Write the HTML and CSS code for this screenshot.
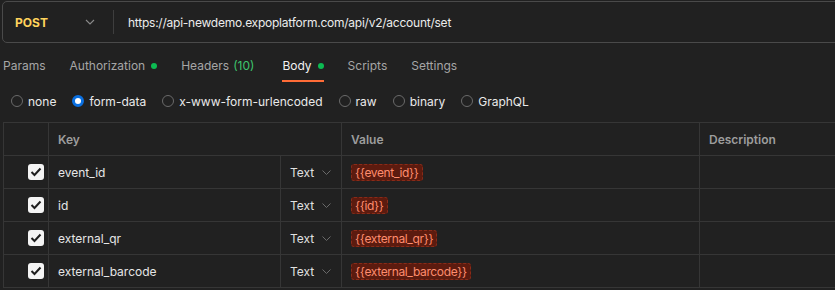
FILE: index.html
```html
<!DOCTYPE html>
<html lang="en">
  <head>
    <meta charset="UTF-8" />
    <title>POST account/set</title>
    <link rel="stylesheet" href="styles.css">
  </head>
  <body>
    <!-- request line -->
    <div class="url-bar">
      <div class="method">
        <span class="method-name">POST</span>
        <svg class="chev" width="10" height="6" viewBox="0 0 10 6"><path d="M1 1l4 4 4-4" fill="none" stroke="#8a8a8a" stroke-width="1.1"/></svg>
      </div>
      <div class="divider"></div>
      <div class="url">https://api-newdemo.expoplatform.com/api/v2/account/set</div>
    </div>

    <!-- request tabs -->
    <div class="tabs">
      <span class="tab">Params</span>
      <span class="tab">Authorization <i class="dot"></i></span>
      <span class="tab">Headers <em class="count">(10)</em></span>
      <span class="tab active">Body <i class="dot"></i></span>
      <span class="tab">Scripts</span>
      <span class="tab">Settings</span>
    </div>

    <!-- body type -->
    <div class="body-types">
      <label class="radio"><span class="circle"></span>none</label>
      <label class="radio"><span class="circle on"></span>form-data</label>
      <label class="radio"><span class="circle"></span>x-www-form-urlencoded</label>
      <label class="radio"><span class="circle"></span>raw</label>
      <label class="radio"><span class="circle"></span>binary</label>
      <label class="radio"><span class="circle"></span>GraphQL</label>
    </div>

    <!-- form-data table -->
    <div class="kv-table">
      <div class="cell"></div>
      <div class="cell head span2">Key</div>
      <div class="cell head">Value</div>
      <div class="cell head">Description</div>

      <div class="cell check"><span class="box"><svg width="12" height="10" viewBox="0 0 12 10"><path d="M1.5 5l3 3 6-6.5" fill="none" stroke="#1e1e1e" stroke-width="2"/></svg></span></div>
      <div class="cell key">event_id</div>
      <div class="cell type">Text <svg width="9" height="5" viewBox="0 0 9 5"><path d="M.5.5l4 4 4-4" fill="none" stroke="#6a6a6a"/></svg></div>
      <div class="cell value"><span class="var">{{event_id}}</span></div>
      <div class="cell"></div>

      <div class="cell check"><span class="box"><svg width="12" height="10" viewBox="0 0 12 10"><path d="M1.5 5l3 3 6-6.5" fill="none" stroke="#1e1e1e" stroke-width="2"/></svg></span></div>
      <div class="cell key">id</div>
      <div class="cell type">Text <svg width="9" height="5" viewBox="0 0 9 5"><path d="M.5.5l4 4 4-4" fill="none" stroke="#6a6a6a"/></svg></div>
      <div class="cell value"><span class="var">{{id}}</span></div>
      <div class="cell"></div>

      <div class="cell check"><span class="box"><svg width="12" height="10" viewBox="0 0 12 10"><path d="M1.5 5l3 3 6-6.5" fill="none" stroke="#1e1e1e" stroke-width="2"/></svg></span></div>
      <div class="cell key">external_qr</div>
      <div class="cell type">Text <svg width="9" height="5" viewBox="0 0 9 5"><path d="M.5.5l4 4 4-4" fill="none" stroke="#6a6a6a"/></svg></div>
      <div class="cell value"><span class="var">{{external_qr}}</span></div>
      <div class="cell"></div>

      <div class="cell check"><span class="box"><svg width="12" height="10" viewBox="0 0 12 10"><path d="M1.5 5l3 3 6-6.5" fill="none" stroke="#1e1e1e" stroke-width="2"/></svg></span></div>
      <div class="cell key">external_barcode</div>
      <div class="cell type">Text <svg width="9" height="5" viewBox="0 0 9 5"><path d="M.5.5l4 4 4-4" fill="none" stroke="#6a6a6a"/></svg></div>
      <div class="cell value"><span class="var">{{external_barcode}}</span></div>
      <div class="cell"></div>
    </div>
  </body>
</html>
```

FILE: styles.css
```css
/* reset */
* {
  margin: 0;
  padding: 0;
  box-sizing: border-box;
}
body {
  background-color: #212121;
  font-family: "Inter", "Liberation Sans", sans-serif;
  font-size: 12px;
  color: #e6e6e6;
  width: 835px;
  height: 290px;
  overflow: hidden;
}
/* request line */
.url-bar {
  display: flex;
  align-items: center;
  width: 860px;
  height: 42px;
  margin: 1px 0 0 2px;
  border: 1px solid #4a4a4a;
  border-radius: 5px;
}
.method {
  display: flex;
  align-items: center;
  justify-content: space-between;
  width: 110px;
  padding: 0 18px 0 12px;
}
.method-name {
  color: #ffd35c;
  font-weight: 700;
}
.divider {
  width: 1px;
  height: 24px;
  background-color: #3e3e3e;
}
.url {
  padding-left: 14px;
  color: #ececec;
  letter-spacing: -0.24px;
}
/* tabs */
.tabs {
  display: flex;
  gap: 24px;
  height: 39px;
  padding: 15px 0 0 3px;
}
.tab {
  display: flex;
  align-items: flex-start;
  gap: 6px;
  height: 24px;
  color: #a6a6a6;
}
.tab.active {
  color: #f2f2f2;
  border-bottom: 2px solid #ff6c37;
}
.dot {
  width: 6px;
  height: 6px;
  margin-top: 5px;
  border-radius: 50%;
  background-color: #0cbb52;
}
.count {
  font-style: normal;
  color: #3ec46d;
  margin: 0 4px 0 -2px;
}
/* body type radios */
.body-types {
  display: flex;
  gap: 16px;
  height: 40px;
  padding: 11px 0 0 11px;
}
.radio {
  display: flex;
  align-items: center;
  gap: 5px;
  height: 16px;
  color: #eaeaea;
}
.circle {
  width: 12px;
  height: 12px;
  border: 1px solid #6a6a6a;
  border-radius: 50%;
}
.circle.on {
  border: 3px solid #0a6fe0;
  background-color: #ffffff;
}
/* key value table */
.kv-table {
  display: grid;
  grid-template-columns: 45px 232px 61px 358px 200px;
  grid-auto-rows: 33px;
  margin-left: 3px;
  border-top: 1px solid #363636;
  border-left: 1px solid #363636;
}
.cell {
  display: flex;
  align-items: center;
  padding-left: 9px;
  border-right: 1px solid #363636;
  border-bottom: 1px solid #363636;
}
.span2 {
  grid-column: span 2;
}
.head {
  color: #9d9d9d;
  font-weight: 600;
}
.check {
  justify-content: flex-end;
  padding-right: 4px;
}
.box {
  display: flex;
  align-items: center;
  justify-content: center;
  width: 16px;
  height: 16px;
  border-radius: 3px;
  background-color: #f4f4f4;
}
.type {
  gap: 8px;
  color: #e0e0e0;
}
.var {
  padding: 0 3px;
  height: 17px;
  line-height: 15px;
  letter-spacing: -0.35px;
  border: 1px dashed #8a2b18;
  border-radius: 3px;
  background-color: #5c1b0f;
  color: #ff8d6e;
}
```
